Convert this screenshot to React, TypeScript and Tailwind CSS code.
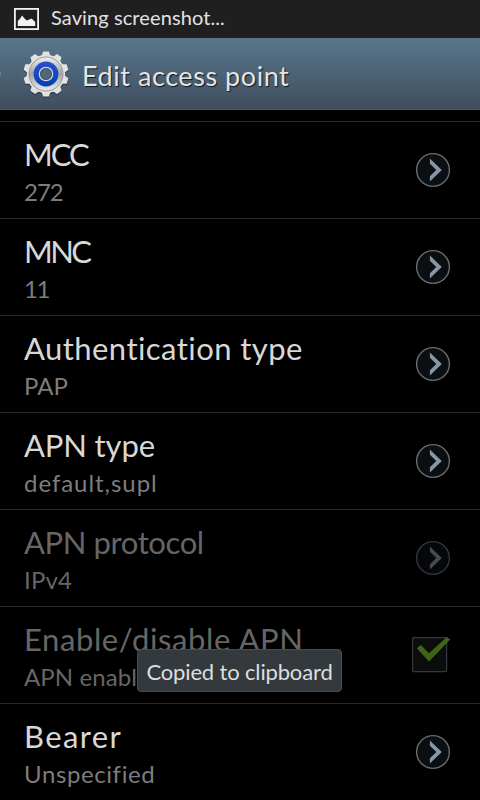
import React from "react";
import clsx from "clsx";

const teeth = [0, 36, 72, 108, 144, 180, 216, 252, 288, 324];

const rows = [
  { title: "MCC", value: "272", titleFit: "tracking-[-2px]", valueFit: "tracking-[-1px]" },
  { title: "MNC", value: "11", titleFit: "tracking-[-2.6px]", valueFit: "tracking-[-1.5px]" },
  { title: "Authentication type", value: "PAP", titleFit: "tracking-[0.44px]", valueFit: "tracking-[0px]" },
  { title: "APN type", value: "default,supl", titleFit: "tracking-[-0.15px]", valueFit: "tracking-[0.95px]" },
  { title: "APN protocol", value: "IPv4", titleFit: "tracking-[-0.4px]", valueFit: "tracking-[0.2px]", disabled: true },
  { title: "Enable/disable APN", value: "APN enabled", titleFit: "tracking-[0.6px]", valueFit: "tracking-[0.1px]", disabled: true, checkbox: true },
  { title: "Bearer", value: "Unspecified", titleFit: "tracking-[1.4px]", valueFit: "tracking-[0.6px]" },
];

const GearIcon = () => (
  <svg width="50" height="50" viewBox="-25 -25 50 50" className="shrink-0">
    <defs>
      <linearGradient id="metal" x1="0" y1="0" x2="0" y2="1">
        <stop offset="0" stopColor="#f0f0f0" />
        <stop offset="0.5" stopColor="#a2a2a2" />
        <stop offset="1" stopColor="#ececec" />
      </linearGradient>
      <linearGradient id="blue" x1="0" y1="0" x2="0" y2="1">
        <stop offset="0" stopColor="#2450d4" />
        <stop offset="1" stopColor="#0540b4" />
      </linearGradient>
    </defs>
    <g fill="#26323c" opacity="0.7" transform="translate(0 1.2)">
      <circle r="19.6" />
      {teeth.map((a) => (
        <path key={a} d="M-4.5 -18L-2.8 -22.8H2.8L4.5 -18Z" transform={`rotate(${a})`} />
      ))}
    </g>
    <g fill="#e2e2e2">
      <circle r="19.2" />
      {teeth.map((a) => (
        <path key={a} d="M-4.5 -18L-2.8 -22.6H2.8L4.5 -18Z" transform={`rotate(${a})`} />
      ))}
    </g>
    <circle r="17" fill="url(#metal)" stroke="#8e8e8e" strokeWidth="0.9" />
    <circle r="12.4" fill="url(#blue)" />
    <circle r="6.6" fill="#4f687b" stroke="#d0d5dc" strokeWidth="1.5" />
    <circle r="5.5" fill="none" stroke="#35434f" strokeWidth="0.8" />
  </svg>
);

const ArrowIcon = () => (
  <svg width="36" height="36" viewBox="0 0 36 36">
    <circle cx="18" cy="18" r="16.4" fill="#0c0f11" stroke="#686b6f" strokeWidth="1.4" />
    <path d="M14.9 6.4L26.8 18L14.9 29.4V24.3L21.3 18L14.9 11.7Z" fill="#8496a8" />
  </svg>
);

const CheckIcon = () => (
  <svg width="40" height="38" viewBox="0 0 40 38">
    <rect x="1.6" y="1.6" width="34" height="34" rx="1" fill="#0a0c0e" stroke="#35383b" strokeWidth="1.3" />
    <path d="M5.8 12.2L9.8 9L18 17.2L35.8 1L39.2 3.6L18 25.6Z" fill="#3f6512" />
  </svg>
);

const App = () => {
  return (
    <div className="relative w-[480px] h-[800px] overflow-hidden bg-black font-['Lato',sans-serif]">
      {/* status bar */}
      <div className="h-[38px] bg-[#1f1f1f] flex items-center pl-[14px]">
        <svg width="25" height="22" viewBox="0 0 25 22" className="shrink-0">
          <rect x="0.9" y="0.9" width="23.2" height="20.2" fill="none" stroke="#f2f2f2" strokeWidth="1.8" />
          <path d="M3.8 18V13L6.2 10.5L8 7.4L10.8 10.8L12.8 12.6L17.6 10.6L21.2 14V18Z" fill="#f2f2f2" />
        </svg>
        <span className="ml-3 -mt-1 text-[20px] leading-none text-[#e2e2e2] tracking-[0.1px] whitespace-nowrap">Saving screenshot...</span>
      </div>
      {/* title */}
      <header className="relative h-[72px] flex items-center pl-[21px] bg-linear-to-b from-[#59778c] to-[#3f4e5e] border-b border-[#4a5a68]">
        <span className="absolute left-0 top-[34px] w-px h-[4px] bg-[#64808f]" />
        <GearIcon />
        <h1 className="ml-[11px] mt-1 text-[27px] leading-none text-[#e4e4e4] tracking-[0.55px] whitespace-nowrap [text-shadow:1px_1px_1px_#10161c]">
          Edit access point
        </h1>
      </header>
      {/* settings list */}
      <ul className="mt-[11px]">
        {rows.map((row) => (
          <li key={row.title} className="h-[97px] border-t border-[#282828] flex items-center justify-between pl-6 pr-[29px]">
            <div className="whitespace-nowrap">
              <p className={clsx("text-[31px] leading-[42px]", row.titleFit, row.disabled ? "text-[#666]" : "text-[#d8d8d8]")}>{row.title}</p>
              <p className={clsx("text-[24px] leading-[34px] -mb-[2px]", row.valueFit, row.disabled ? "text-[#666]" : "text-[#7d7d7d]")}>{row.value}</p>
            </div>
            <div className={clsx(row.disabled && !row.checkbox && "opacity-50")}>
              {row.checkbox ? <CheckIcon /> : <ArrowIcon />}
            </div>
          </li>
        ))}
      </ul>
      {/* toast */}
      <div className="absolute left-[137px] top-[649px] w-[205px] h-[43px] rounded-[4px] border border-[#484d50] bg-[#33393d] flex items-center justify-center">
        <span className="mt-[2px] text-[22px] leading-none text-[#dedede] tracking-[-0.15px] whitespace-nowrap">Copied to clipboard</span>
      </div>
    </div>
  );
};

export default App;
